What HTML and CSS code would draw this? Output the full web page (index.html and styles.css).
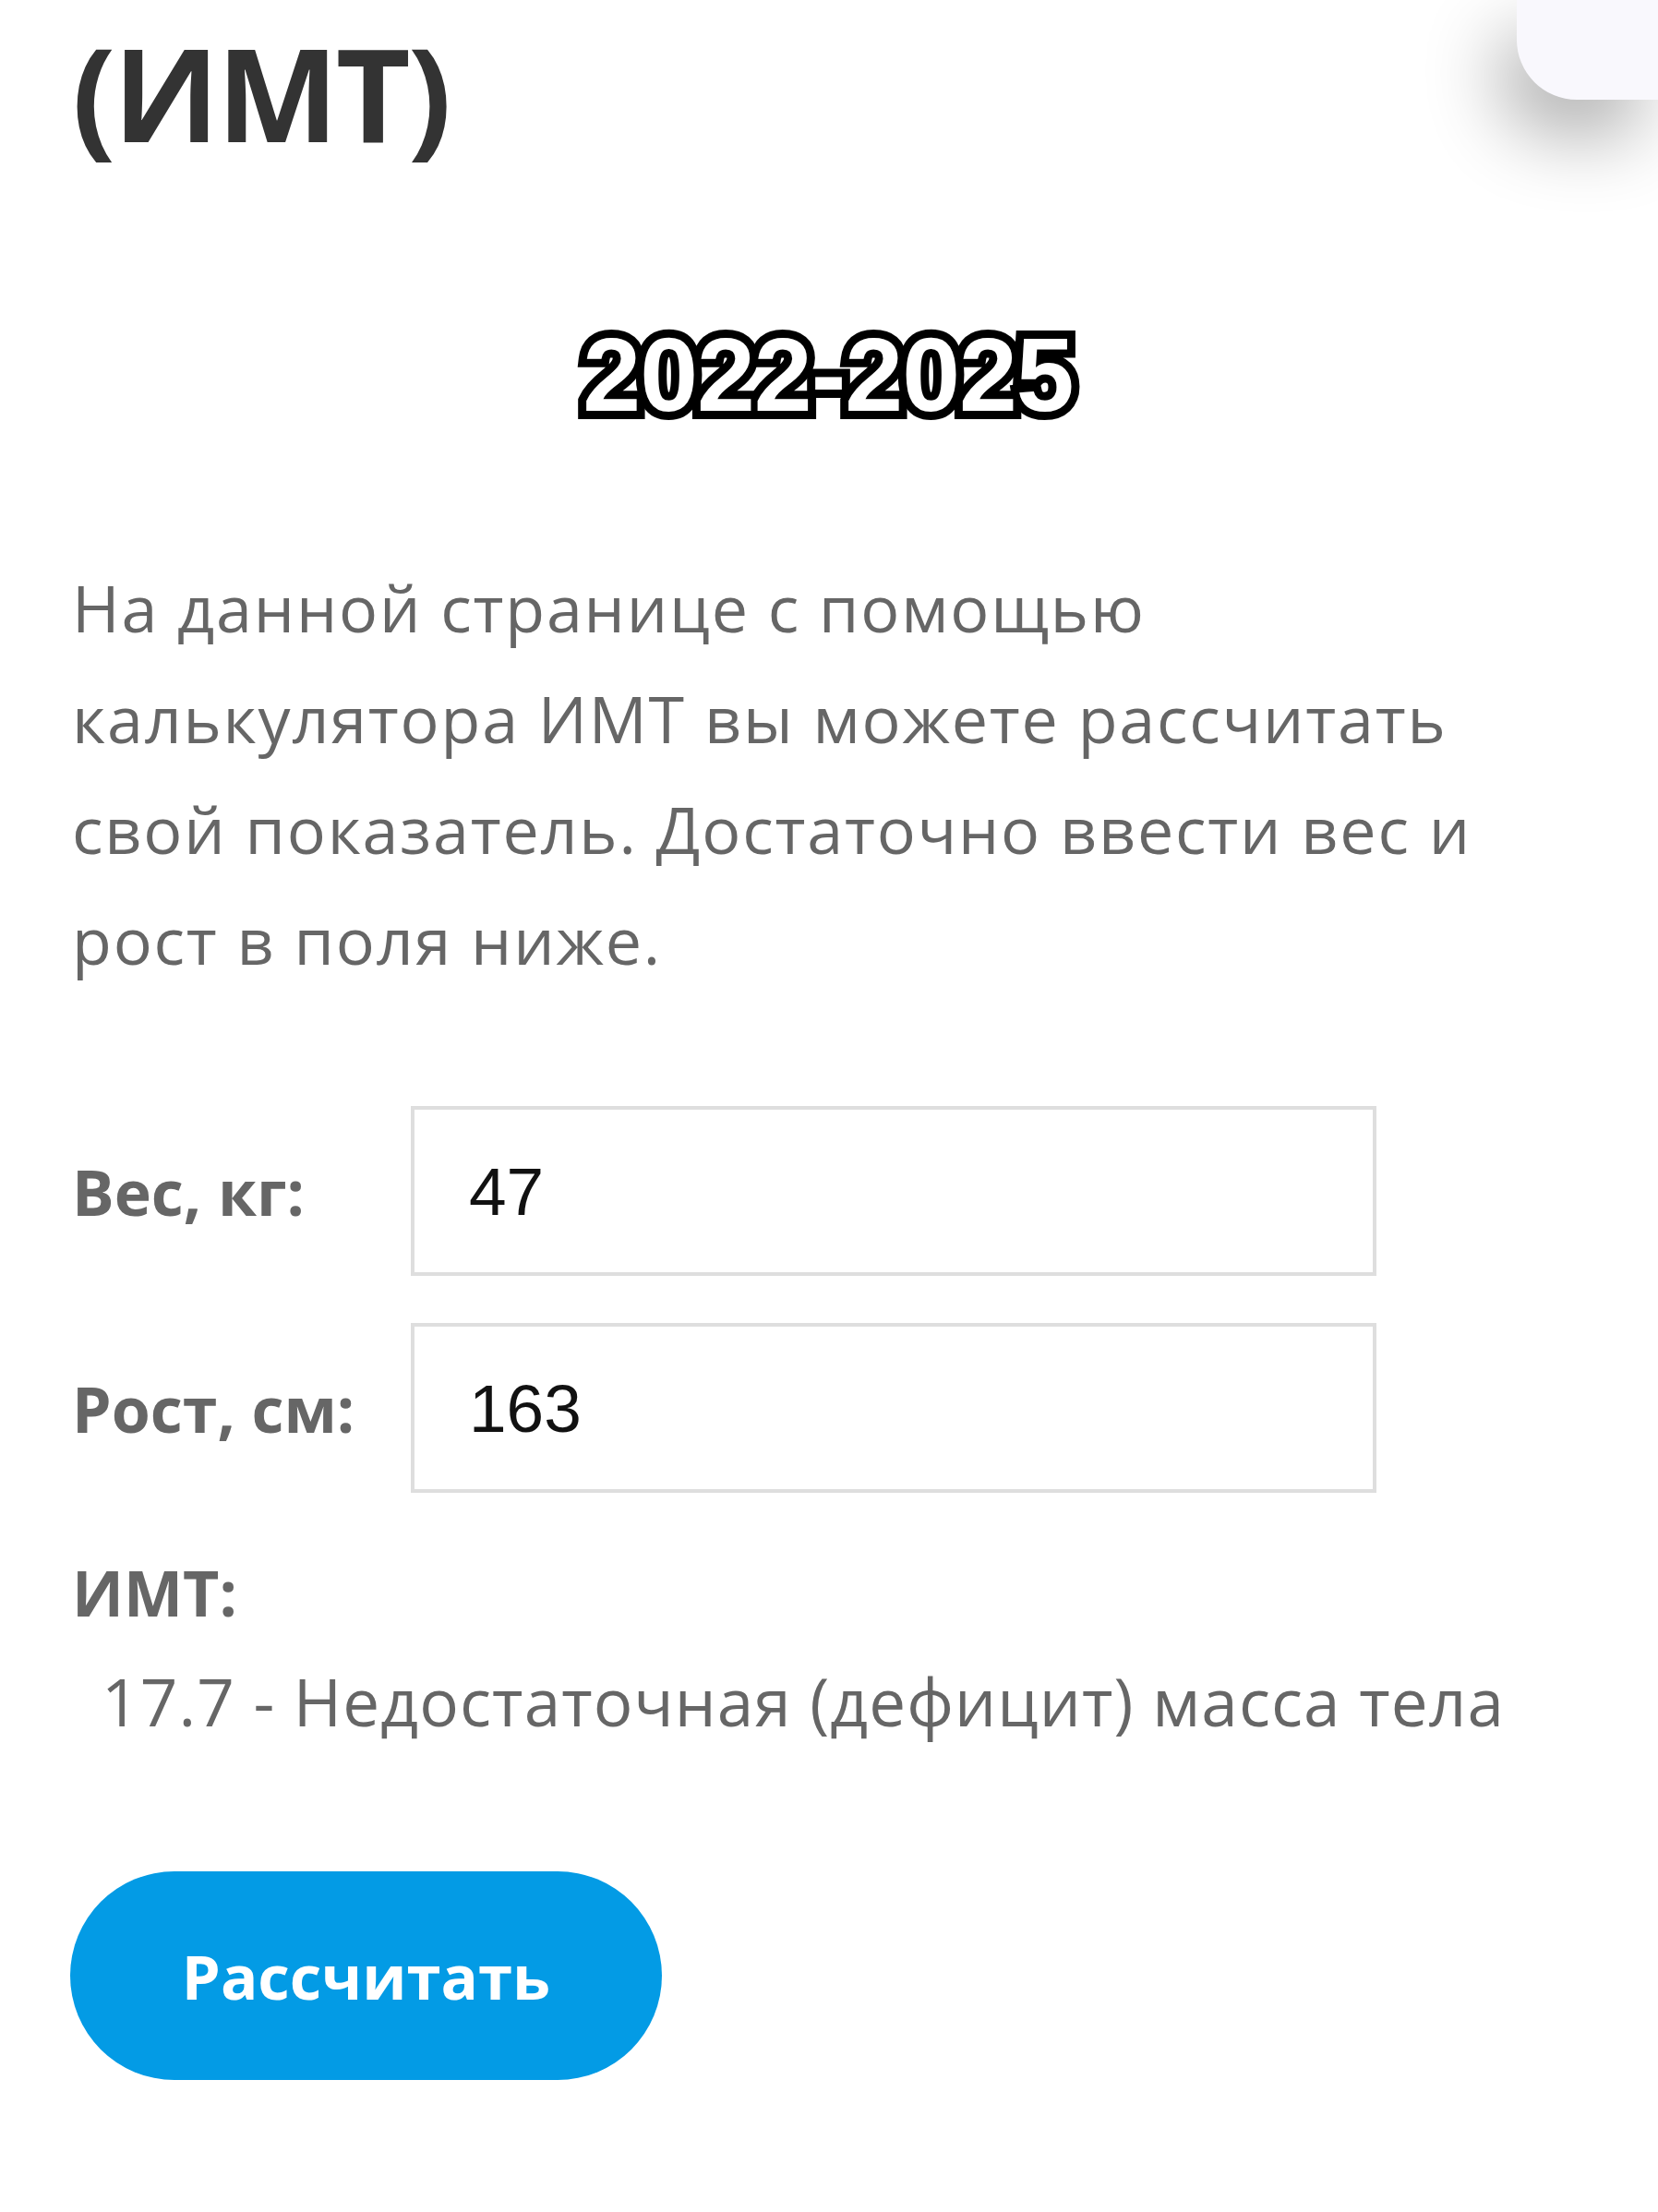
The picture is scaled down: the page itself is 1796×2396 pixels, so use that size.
FILE: index.html
```html
<!DOCTYPE html>
<html lang="ru">
<head>
<meta charset="utf-8">
<title>Калькулятор ИМТ</title>
<link rel="stylesheet" href="styles.css">
</head>
<body>
<div class="corner-card"></div>
<main class="page">
  <h1 class="title">(ИМТ)</h1>
  <div class="years">2022-2025</div>
  <p class="intro">На данной странице с помощью калькулятора ИМТ вы можете рассчитать свой показатель. Достаточно ввести вес и рост в поля ниже.</p>
  <form class="calc">
    <div class="row">
      <label class="label" for="w">Вес, кг:</label>
      <input class="field" id="w" type="text" value="47">
    </div>
    <div class="row">
      <label class="label" for="h">Рост, см:</label>
      <input class="field" id="h" type="text" value="163">
    </div>
    <div class="bmi-label">ИМТ:</div>
    <div class="bmi-result">17.7 - Недостаточная (дефицит) масса тела</div>
    <button type="button" class="btn">Рассчитать</button>
  </form>
</main>
</body>
</html>
```

FILE: styles.css
```css
html, body {
  margin: 0;
  padding: 0;
  background: #ffffff;
}
body {
  font-family: "Open Sans", "Noto Sans", sans-serif;
  position: relative;
  overflow: hidden;
  min-height: 2396px;
}
.corner-card {
  position: absolute;
  top: 0;
  right: 0;
  width: 153px;
  height: 108px;
  background: #f9f8fd;
  border-bottom-left-radius: 65px;
  box-shadow: -20px 40px 80px rgba(0, 0, 0, 0.3);
}
.page {
  padding: 0 80px 0 78px;
  display: flex;
  flex-direction: column;
}
.title {
  margin: 16px 0 0 0;
  font-size: 140px;
  line-height: 168px;
  font-weight: 700;
  letter-spacing: -3px;
  color: #333333;
}
.years {
  margin-top: 166px;
  align-self: center;
  font-family: "Liberation Sans", Arial, sans-serif;
  font-weight: 700;
  font-size: 113px;
  line-height: 112px;
  letter-spacing: -1px;
  color: #ffffff;
  -webkit-text-stroke: 18px #000000;
  paint-order: stroke fill;
  text-shadow: 0 2px 4px rgba(0, 0, 0, 0.4);
}
.intro {
  margin: 136px 0 0 0;
  font-size: 70px;
  line-height: 120px;
  letter-spacing: 1.8px;
  color: #666666;
  max-width: 1560px;
}
.calc {
  margin-top: 120px;
  display: flex;
  flex-direction: column;
}
.row {
  display: flex;
  align-items: center;
  margin-bottom: 51px;
}
.label {
  width: 367px;
  flex: none;
  font-size: 68px;
  font-weight: 700;
  color: #666666;
}
.field {
  box-sizing: border-box;
  width: 1046px;
  height: 184px;
  border: 4px solid #dedede;
  border-radius: 0;
  padding: 0 0 0 59px;
  margin: 0;
  font-family: "Liberation Sans", Arial, sans-serif;
  font-size: 73px;
  color: #111111;
  background: #ffffff;
  outline: none;
}
.bmi-label {
  margin-top: 8px;
  font-size: 68px;
  line-height: 98px;
  font-weight: 700;
  color: #666666;
}
.bmi-result {
  margin-top: 20px;
  padding-left: 32px;
  font-size: 71px;
  line-height: 98px;
  letter-spacing: 1.1px;
  color: #666666;
}
.btn {
  margin-top: 135px;
  margin-left: -2px;
  align-self: flex-start;
  width: 641px;
  height: 226px;
  border: none;
  border-radius: 113px;
  background: #039be5;
  color: #ffffff;
  font-family: "Open Sans", "Noto Sans", sans-serif;
  font-size: 67px;
  font-weight: 700;
  padding: 0;
}
```
